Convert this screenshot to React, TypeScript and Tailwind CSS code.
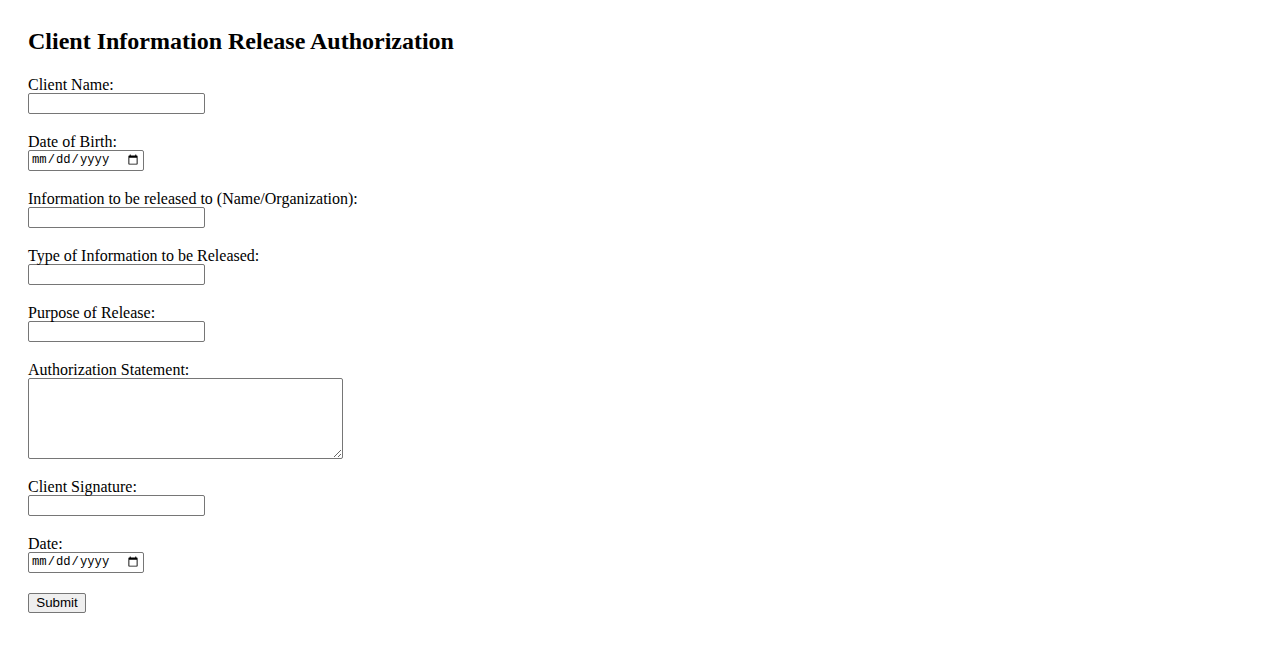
import React from "react";

const serif = { fontFamily: '"Liberation Serif", "Times New Roman", serif' };

function Field({ label, children, last }: { label: string; children: React.ReactNode; last?: boolean }) {
  return (
    <div className={last ? "mb-[20px]" : "mb-[18px]"}>
      <label className="block h-[18px] text-[16px] leading-[20px] text-black">{label}</label>
      {children}
    </div>
  );
}

const textCls =
  "block w-[177px] h-[21px] border border-[#767676] rounded-[2px] bg-white px-[2px] text-[13.33px] font-['Liberation_Sans',Arial,sans-serif] outline-none";
const dateCls =
  "block w-[116px] h-[21px] border border-[#767676] rounded-[2px] bg-white px-[2px] text-[12.2px] font-['Liberation_Mono',monospace] text-black outline-none";

export default function App() {
  return (
    <div className="min-h-[650px] bg-white pl-[28px] pt-[28px] text-black" style={serif}>
      <h2 className="text-[24px] leading-[27px] font-bold mb-[20px]">Client Information Release Authorization</h2>
      <form onSubmit={(e) => e.preventDefault()}>
        <Field label="Client Name:">
          <input type="text" className={textCls} />
        </Field>
        <Field label="Date of Birth:">
          <input type="date" className={dateCls} />
        </Field>
        <Field label="Information to be released to (Name/Organization):">
          <input type="text" className={textCls} />
        </Field>
        <Field label="Type of Information to be Released:">
          <input type="text" className={textCls} />
        </Field>
        <Field label="Purpose of Release:">
          <input type="text" className={textCls} />
        </Field>
        <Field label="Authorization Statement:">
          <textarea className="block w-[315px] h-[81px] border border-[#767676] rounded-[2px] bg-white p-[2px] text-[13.33px] font-['Liberation_Mono',monospace] outline-none resize" />
        </Field>
        <Field label="Client Signature:">
          <input type="text" className={textCls} />
        </Field>
        <Field label="Date:" last>
          <input type="date" className={dateCls} />
        </Field>
        <button
          type="submit"
          className="block w-[58px] h-[20px] border border-[#767676] rounded-[2px] bg-[#efefef] px-[6px] text-[13.33px] leading-[16px] font-['Liberation_Sans',Arial,sans-serif] text-black"
        >
          Submit
        </button>
      </form>
    </div>
  );
}
